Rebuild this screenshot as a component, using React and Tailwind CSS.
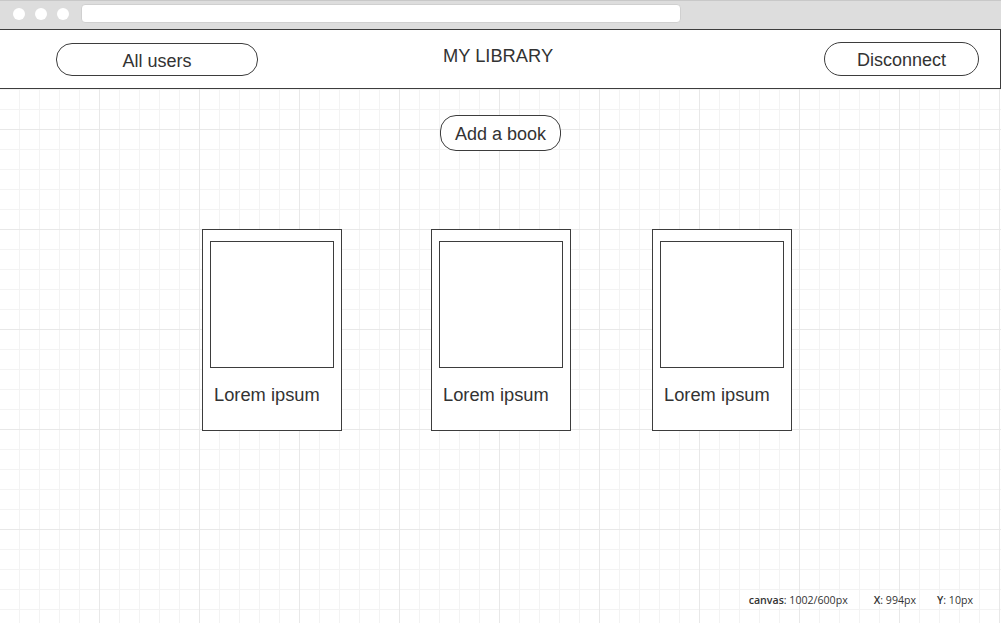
import React from "react";

const font = "font-['Liberation_Sans',Arial,sans-serif]";

function PillButton({ className, children }) {
  return (
    <div
      className={`flex items-center justify-center border border-[#3d3d3d] bg-white text-[18px] leading-[20px] text-[#333] ${className}`}
    >
      <span className="pt-[2px]">{children}</span>
    </div>
  );
}

function BookCard({ className }) {
  return (
    <div className={`flex h-[202px] w-[140px] flex-col border border-[#3d3d3d] bg-white px-[7px] pt-[11px] ${className}`}>
      <div className="h-[127px] w-[124px] border border-[#3d3d3d] bg-white" />
      <div className="mt-[17px] pl-[4px] text-[18.3px] leading-[20px] text-[#333]">Lorem ipsum</div>
    </div>
  );
}

export default function App() {
  return (
    <div className={`flex h-[623px] w-[1001px] flex-col overflow-hidden bg-white ${font}`}>
      {/* browser chrome */}
      <div className="flex h-[29px] shrink-0 items-start border-t border-[#c8c8c8] bg-[#dddddd]">
        <div className="ml-[13px] mt-[7px] h-[12px] w-[12px] rounded-full bg-white" />
        <div className="ml-[10px] mt-[7px] h-[12px] w-[12px] rounded-full bg-white" />
        <div className="ml-[10px] mt-[7px] h-[12px] w-[12px] rounded-full bg-white" />
        <div className="ml-[12px] mt-[3px] h-[19px] w-[600px] rounded-[4px] border border-[#d0d0d0] bg-white" />
      </div>

      {/* canvas */}
      <div className="flex flex-1 flex-col bg-white bg-[linear-gradient(to_right,#e8e8e8_1px,transparent_1px),linear-gradient(to_bottom,#e8e8e8_1px,transparent_1px),linear-gradient(to_right,#f3f3f3_1px,transparent_1px),linear-gradient(to_bottom,#f3f3f3_1px,transparent_1px)] [background-size:100px_100px,100px_100px,20px_20px,20px_20px] [background-position:-1px_0,-1px_0,-1px_0,-1px_0]">
        <header className="flex h-[60px] shrink-0 items-start border border-l-0 border-[#3d3d3d] bg-white">
          <PillButton className="ml-[56px] mt-[13px] h-[33px] w-[202px] rounded-[16px] text-[18.3px]">All users</PillButton>
          <div className="ml-[185px] mt-[16px] text-[18.3px] leading-[20px] text-[#333]">MY LIBRARY</div>
          <PillButton className="ml-auto mr-[21px] mt-[12px] h-[34px] w-[155px] rounded-[17px] text-[18.3px]">Disconnect</PillButton>
        </header>

        <main className="flex flex-1 flex-col">
          <div className="mt-[26px] flex justify-center">
            <PillButton className="h-[36px] w-[121px] rounded-[16px] text-[18.3px]">Add a book</PillButton>
          </div>

          <div className="mt-[78px] flex">
            <BookCard className="ml-[202px]" />
            <BookCard className="ml-[89px]" />
            <BookCard className="ml-[81px]" />
          </div>

          <div className="mt-auto mb-[17px] flex justify-end pr-[28px] font-['Open_Sans',sans-serif] text-[10.6px] leading-[12px] text-[#333]">
            <span>
              <b className="font-semibold">canvas</b>: 1002/600px
            </span>
            <span className="ml-[26px]">
              <b className="font-semibold">X</b>: 994px
            </span>
            <span className="ml-[21px]">
              <b className="font-semibold">Y</b>: 10px
            </span>
          </div>
        </main>
      </div>
    </div>
  );
}
